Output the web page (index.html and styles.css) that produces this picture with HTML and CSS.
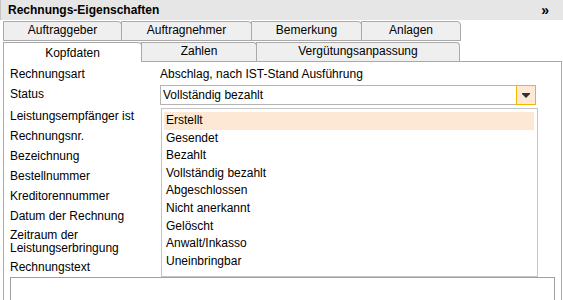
FILE: index.html
```html
<!DOCTYPE html>
<html lang="de">
<head>
    <meta charset="UTF-8">
    <meta name="viewport" content="width=device-width, initial-scale=1.0">
    <title>Rechnungs-Eigenschaften</title>

    <link rel="stylesheet" href="styles.css">
</head>
<body>

    <div class="window">
        <div class="titlebar">
            <span class="title">Rechnungs-Eigenschaften</span>
            <span class="collapse">&raquo;</span>
        </div>

        <div class="tabs">
            <div class="tab-row tab-row-top">
                <div class="tab">Auftraggeber</div>
                <div class="tab">Auftragnehmer</div>
                <div class="tab">Bemerkung</div>
                <div class="tab">Anlagen</div>
            </div>
            <div class="tab-row tab-row-bottom">
                <div class="tab active">Kopfdaten</div>
                <div class="tab">Zahlen</div>
                <div class="tab">Vergütungsanpassung</div>
            </div>
        </div>

        <div class="panel">
            <div class="form">
                <div class="label">Rechnungsart</div>
                <div class="value">Abschlag, nach IST-Stand Ausführung</div>

                <div class="label">Status</div>
                <div class="value">
                    <div class="select">
                        <span class="select-text">Vollständig bezahlt</span>
                        <span class="select-button"><span class="arrow"></span></span>

                        <ul class="dropdown">
                            <li class="selected">Erstellt</li>
                            <li>Gesendet</li>
                            <li>Bezahlt</li>
                            <li>Vollständig bezahlt</li>
                            <li>Abgeschlossen</li>
                            <li>Nicht anerkannt</li>
                            <li>Gelöscht</li>
                            <li>Anwalt/Inkasso</li>
                            <li>Uneinbringbar</li>
                        </ul>
                    </div>
                </div>

                <div class="label">Leistungsempfänger ist</div>
                <div class="value"></div>

                <div class="label">Rechnungsnr.</div>
                <div class="value"></div>

                <div class="label">Bezeichnung</div>
                <div class="value"></div>

                <div class="label">Bestellnummer</div>
                <div class="value"></div>

                <div class="label">Kreditorennummer</div>
                <div class="value"></div>

                <div class="label">Datum der Rechnung</div>
                <div class="value"></div>

                <div class="label label-tall">Zeitraum der<br>Leistungserbringung</div>
                <div class="value"></div>

                <div class="label full">Rechnungstext</div>
            </div>

            <textarea class="invoice-text"></textarea>
        </div>
    </div>

</body>
</html>
```

FILE: styles.css
```css
/* --- Basic Reset --- */
* {
    margin: 0;
    padding: 0;
    box-sizing: border-box;
}

body {
    font-family: "Liberation Sans", Arial, sans-serif;
    font-size: 12px;
    color: #000;
    background-color: #fff;
    overflow: hidden;
}

.window {
    width: 563px;
    height: 300px;
    overflow: hidden;
}

/* --- Title bar --- */
.titlebar {
    height: 20px;
    display: flex;
    align-items: center;
    justify-content: space-between;
    padding: 0 14px 0 7px;
    background-color: #e6e6e6;
    border-left: 1px solid #c4c4c4;
    font-weight: bold;
}

.collapse {
    font-size: 14px;
    line-height: 20px;
}

/* --- Tabs --- */
.tabs {
    margin: 1px 0 0 3px;
}

.tab-row {
    display: grid;
}

.tab-row-top {
    grid-template-columns: 118px 130px 110px 99px;
    margin-bottom: 1px;
}

.tab-row-bottom {
    grid-template-columns: 138px 115px 203px;
    align-items: end;
    height: 19px;
}

.tab {
    height: 19px;
    line-height: 17px;
    margin-right: -1px;
    text-align: center;
    background-color: #efefef;
    border: 1px solid #a9a9a9;
    border-top-right-radius: 4px;
    white-space: nowrap;
}

.tab-row-top .tab {
    height: 20px;
}

.tab-row-bottom .tab {
    border-bottom: none;
}

.tab.active {
    height: 20px;
    line-height: 20px;
    margin-bottom: -1px;
    position: relative;
    background-color: #fff;
}

/* --- Content panel --- */
.panel {
    width: 559px;
    height: 240px;
    margin-left: 3px;
    padding: 2px 0 0 6px;
    border: 1px solid #a9a9a9;
    border-bottom: none;
}

.form {
    display: grid;
    grid-template-columns: 150px 1fr;
    /* Rechnungsart, Status, 6 simple rows, Zeitraum, Rechnungstext */
    grid-template-rows: 20px 22px repeat(6, 20px) 31px 20px;
}

.label,
.value {
    line-height: 20px;
    white-space: nowrap;
}

.label-tall {
    line-height: 13px;
    padding-top: 3px;
}

.form .full {
    grid-column: 1 / 3;
}

/* --- Select box with open list --- */
.select {
    position: relative;
    width: 376px;
    height: 20px;
    margin-top: 1px;
    padding-left: 2px;
    line-height: 18px;
    border: 1px solid #b4b4b4;
    background-color: #fff;
}

.select-button {
    position: absolute;
    top: -1px;
    right: -1px;
    width: 20px;
    height: 20px;
    display: flex;
    align-items: center;
    justify-content: center;
    background-color: #fde9d5;
    border: 1px solid #f4b400;
}

.arrow {
    width: 0;
    height: 0;
    border-left: 4px solid transparent;
    border-right: 4px solid transparent;
    border-top: 4px solid #333;
    box-shadow: 0 -1px 0 #333;
    margin-top: 1px;
}

.dropdown {
    position: absolute;
    top: 22px;
    left: 0;
    z-index: 2;
    width: 377px;
    height: 169px;
    padding: 3px 3px 0 2px;
    list-style: none;
    background-color: #fff;
    border: 1px solid #c4c4c4;
}

.dropdown li {
    height: 17.6px;
    line-height: 17.6px;
    padding-left: 2px;
}

.dropdown li.selected {
    background-color: #fce8d4;
}

/* --- Text area --- */
.invoice-text {
    display: block;
    width: 545px;
    height: 40px;
    border: 1px solid #a0a0a0;
    resize: none;
    font-family: inherit;
}
```
